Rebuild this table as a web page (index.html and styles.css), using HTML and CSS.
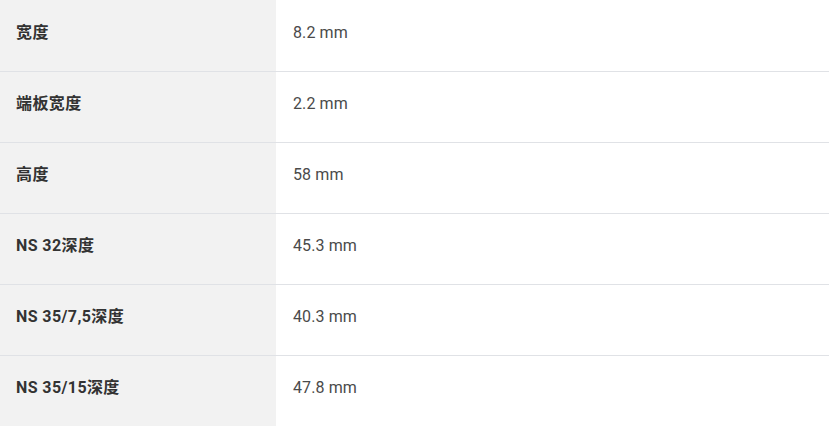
FILE: index.html
```html
<!DOCTYPE html>
<html lang="zh-CN">
<head>
<meta charset="utf-8">
<title>Specs</title>
<link rel="stylesheet" href="styles.css">
</head>
<body>
<div class="specs">
  <div class="row"><div class="label">宽度</div><div class="value">8.2 mm</div></div>
  <div class="row"><div class="label">端板宽度</div><div class="value">2.2 mm</div></div>
  <div class="row"><div class="label">高度</div><div class="value">58 mm</div></div>
  <div class="row"><div class="label">NS 32深度</div><div class="value">45.3 mm</div></div>
  <div class="row"><div class="label">NS 35/7,5深度</div><div class="value">40.3 mm</div></div>
  <div class="row"><div class="label">NS 35/15深度</div><div class="value">47.8 mm</div></div>
</div>
</body>
</html>
```

FILE: styles.css
```css
html, body {
  margin: 0;
  padding: 0;
  background: #ffffff;
}
body {
  font-family: Roboto, "Noto Sans CJK SC", sans-serif;
  font-size: 16px;
}
.specs {
  display: flex;
  flex-direction: column;
  width: 829px;
  padding-top: 1px;
  background: linear-gradient(to right, #f2f2f2 276px, #ffffff 276px);
}
.row {
  display: flex;
  height: 70px;
  border-bottom: 1px solid #e0e2e6;
}
.label {
  width: 276px;
  flex: none;
  box-sizing: border-box;
  background: #f2f2f2;
  padding: 21px 0 0 16px;
  line-height: 22px;
  font-weight: 700;
  letter-spacing: 0.4px;
  color: #333333;
}
.value {
  flex: 1;
  padding: 21px 0 0 17px;
  line-height: 22px;
  letter-spacing: 0.1px;
  color: #4a4a4a;
}
```
